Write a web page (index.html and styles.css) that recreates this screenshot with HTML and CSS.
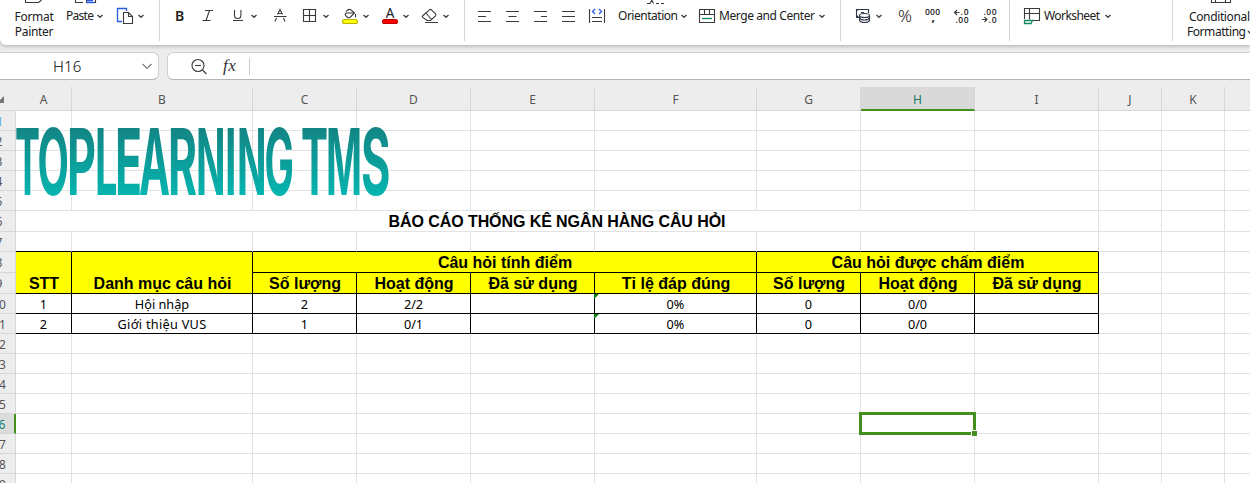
FILE: index.html
```html
<!DOCTYPE html>
<html lang="vi">
<head>
<meta charset="utf-8">
<title>Spreadsheet</title>
<link rel="stylesheet" href="styles.css">
</head>
<body>
<div class="app">
<header class="toolbar">
  <div class="group g-clip">
    <div class="tool fmt"><svg class="peek" viewBox="24 0 20 3"><path d="M25.500 0v2.500h13l3-2.500"/></svg><span>Format</span><span>Painter</span></div>
    <svg class="tool w50" viewBox="66 0 50 46"><path d="M75.500 0v2.500h7.500M86.500 0v2.500h9V0"/><path class="blue" d="M87 .5h6M86.500 2.500h8"/><text class="ui" x="66" y="20" textLength="28">Paste</text><path class="caret" d="m97.500 15 2.500 2.300 2.500-2.300"/></svg>
    <svg class="tool w43" viewBox="116 0 43 46"><path class="blue" d="M122 21.500h-4.500v-13h9V11"/><path d="M123.500 12.500h5l4 4v7h-9zM128.500 12.500v4h4"/><path class="caret" d="m138.500 15 2.500 2.300 2.500-2.300"/></svg>
  </div>
  <div class="group g-font">
    <svg class="tool w30" viewBox="165 0 30 46"><text class="glyph b" x="175" y="20.500">B</text></svg>
    <svg class="tool w30" viewBox="195 0 30 46"><path d="M205 10.500h8M202.500 20.500h8M209.500 10.500l-3.500 10"/></svg>
    <svg class="tool w40" viewBox="225 0 40 46"><path d="M234.500 10v5.500q0 3 3.200 3t3.200-3V10M233 20.500h10"/><path class="caret" d="m251.500 15 2.500 2.300 2.500-2.300"/></svg>
    <svg class="tool w30" viewBox="265 0 30 46"><path d="M274 16.500h12.500M277.500 14.500l2.500-5 2.500 5M278 13.500h4M276.500 18l-1.500 3.500M283.500 18l1.500 3.500"/></svg>
    <svg class="tool w40" viewBox="295 0 40 46"><path d="M303.500 9.500h12v12h-12zM309.500 9.500v12M303.500 15.500h12"/><path class="caret" d="m323.500 15 2.500 2.300 2.500-2.300"/></svg>
    <svg class="tool w40" viewBox="335 0 40 46"><path d="M346 11.500q2-2.500 4.500-2l4 3.500-4.500 4.500q-1.500.8-3-.5l-1.500-1.500q-.7-1.300.5-2.500h7.500M355.500 14v3.500"/><rect class="yellow" x="342.500" y="19.500" width="15" height="4" rx="2"/><path class="caret" d="m363.500 15 2.500 2.300 2.500-2.300"/></svg>
    <svg class="tool w40" viewBox="375 0 40 46"><text class="glyph" x="390" y="18" text-anchor="middle">A</text><rect class="red" x="382.500" y="19.500" width="15" height="4" rx="2"/><path class="caret" d="m403.500 15 2.500 2.300 2.500-2.300"/></svg>
    <svg class="tool w49" viewBox="415 0 49 46"><path d="m422.500 16 7-6.200q1-.8 2 0l4 4q.8 1 0 2l-5 4.700h-3.500l-4.500-3.300q-.6-.6 0-1.200zM426 13l5.500 6.500M425 22.500h13"/><path class="caret" d="m443.500 15 2.500 2.300 2.500-2.300"/></svg>
  </div>
  <div class="group g-align">
    <svg class="tool w28" viewBox="470 0 28 46"><path d="M478 11.500h13M478 16.500h8M478 21.500h13"/></svg>
    <svg class="tool w28" viewBox="498 0 28 46"><path d="M506 11.500h13M508.500 16.500h8M506 21.500h13"/></svg>
    <svg class="tool w28" viewBox="526 0 28 46"><path d="M534 11.500h13M541 16.500h6M534 21.500h13"/></svg>
    <svg class="tool w28" viewBox="554 0 28 46"><path d="M562 11.500h13M562 16.500h13M562 21.500h13"/></svg>
    <svg class="tool w28" viewBox="582 0 28 46"><path d="M589.500 9v14M604.500 9v14M592 17.500h10M592 21.500h10"/><path class="blue" d="m595 9-2.500 2.500L595 14M599 9l2.500 2.500L599 14"/></svg>
    <svg class="tool w85" viewBox="610 0 85 46"><path d="M647 3.500h3l2-3.500M652 .5l1.500 3M656 3.500h3M661 3.500h3"/><text class="ui" x="618" y="20" textLength="60">Orientation</text><path class="caret" d="m681.500 15 2.500 2.300 2.500-2.300"/></svg>
    <svg class="tool w145" viewBox="695 0 145 46"><path d="M699.500 9.500h15v13h-15zM699.500 14.500h15M704.500 9.500v5M709.500 9.500v5"/><path class="green" d="M702 18.500h10"/><text class="ui" x="719" y="20" textLength="96">Merge and Center</text><path class="caret" d="m819.500 15 2.500 2.300 2.500-2.300"/></svg>
  </div>
  <div class="group g-num">
    <svg class="tool w45" viewBox="845 0 45 46"><path class="navy" d="M859 17.500h-2.500v-8h12V13M861 12.500h3M856.500 10.500l2-1M856.500 15.500l2 2"/><path class="navy" fill="#fff" d="M859.500 16v4.500q1 2 5 2t5-2V16"/><ellipse class="navy" cx="864.500" cy="15.500" rx="5" ry="2"/><path class="navy" d="M859.500 18q1 2 5 2t5-2"/><path class="caret" d="m876.500 15 2.500 2.300 2.500-2.300"/></svg>
    <svg class="tool w30" viewBox="890 0 30 46"><text class="pct" x="898" y="21.500" textLength="14" lengthAdjust="spacingAndGlyphs">%</text></svg>
    <svg class="tool w28" viewBox="920 0 28 46"><text class="tiny" x="925" y="15" textLength="15">000</text><text class="tiny comma" x="931.500" y="21">,</text></svg>
    <svg class="tool w28" viewBox="948 0 28 46"><path d="M954.500 12.500h5M957 10l-2.500 2.500L957 15"/><text class="tiny" x="960.500" y="15" textLength="8">.0</text><text class="tiny" x="955.500" y="23" textLength="13">.00</text></svg>
    <svg class="tool w33" viewBox="976 0 33 46"><text class="tiny" x="983.500" y="15" textLength="13">.00</text><path d="M982 19.500h5M984.500 17l2.500 2.500-2.500 2.500"/><text class="tiny" x="988.500" y="23" textLength="8">.0</text></svg>
  </div>
  <div class="group g-sheet">
    <svg class="tool w145" viewBox="1015 0 145 46"><path d="M1024.500 19V8.500h15v12H1033M1024.500 13.500h15M1029.500 8.500v11"/><path class="green" d="M1024.500 20.500h8l-1.500 3h-6.500z"/><text class="ui" x="1044" y="20" textLength="56">Worksheet</text><path class="caret" d="m1105.500 15 2.500 2.300 2.500-2.300"/></svg>
  </div>
  <div class="group g-cond">
    <svg class="tool w90" viewBox="1173 0 90 46"><path d="M1211.500 0v2.500h19V0M1215.500 0v2.500M1225.500 0v2.500"/><text class="ui" x="1189" y="21" textLength="61">Conditional</text><text class="ui" x="1187" y="36" textLength="59">Formatting</text><path class="caret" d="m1248 31 2 2 2-2"/></svg>
  </div>
</header>
<div class="formula">
  <div class="namebox"><span>H16</span><svg viewBox="142 62 10 8" width="10" height="8"><path class="thin" d="m142.500 64 4.500 4.500 4.500-4.500"/></svg></div>
  <div class="fxbox">
    <svg viewBox="190 57 18 18" width="18" height="18"><circle cx="198" cy="65.500" r="6"/><path d="M195 65.500h6M202.500 70l4 4"/></svg>
    <span class="fx">fx</span><i class="bar"></i>
  </div>
</div>
<main class="sheet">
<table>
<colgroup><col class="rh"><col class="ca"><col class="cb"><col class="cc"><col class="cd"><col class="ce"><col class="cf"><col class="cc"><col class="cd"><col class="ce"><col class="cj"><col class="cj"><col class="cj"></colgroup>
<tr class="cols"><th class="corner"><svg class="mark" viewBox="0 0 7 7" width="7" height="7"><path d="M7 0v7H0z"/></svg></th><th>A<th>B<th>C<th>D<th>E<th>F<th>G<th class="on">H<th>I<th>J<th>K<th></tr>
<tr><th class="first">1</th><td class="logo-cell"><svg class="logo" viewBox="0 0 376 76" width="376" height="76" role="img">
<defs><linearGradient id="teal" gradientUnits="userSpaceOnUse" x1="0" y1="4" x2="0" y2="72"><stop offset="0" stop-color="#128584"/><stop offset="1" stop-color="#06b5b0"/></linearGradient></defs>
<text y="71"><tspan x="-1" textLength="25" lengthAdjust="spacingAndGlyphs">T</tspan><tspan x="21.500" textLength="31.500" lengthAdjust="spacingAndGlyphs">O</tspan><tspan x="51" textLength="29" lengthAdjust="spacingAndGlyphs">P</tspan><tspan x="79" textLength="22.500" lengthAdjust="spacingAndGlyphs">L</tspan><tspan x="99" textLength="27" lengthAdjust="spacingAndGlyphs">E</tspan><tspan x="123" textLength="31" lengthAdjust="spacingAndGlyphs">A</tspan><tspan x="152" textLength="29" lengthAdjust="spacingAndGlyphs">R</tspan><tspan x="180" textLength="29.500" lengthAdjust="spacingAndGlyphs">N</tspan><tspan x="209" textLength="11.500" lengthAdjust="spacingAndGlyphs">I</tspan><tspan x="221" textLength="29.500" lengthAdjust="spacingAndGlyphs">N</tspan><tspan x="248.500" textLength="29.500" lengthAdjust="spacingAndGlyphs">G</tspan></text>
<text y="71"><tspan x="285" textLength="27" lengthAdjust="spacingAndGlyphs">T</tspan><tspan x="310" textLength="36" lengthAdjust="spacingAndGlyphs">M</tspan><tspan x="345" textLength="29.500" lengthAdjust="spacingAndGlyphs">S</tspan></text>
</svg><td><td><td><td><td><td><td><td><td><td><td></tr>
<tr><th>2</th><td><td><td><td><td><td><td><td><td><td><td><td></tr>
<tr><th>3</th><td><td><td><td><td><td><td><td><td><td><td><td></tr>
<tr><th>4</th><td><td><td><td><td><td><td><td><td><td><td><td></tr>
<tr><th>5</th><td><td><td><td><td><td><td><td><td><td><td><td></tr>
<tr class="tall"><th>6</th><td colspan="9" class="title"><span>BÁO CÁO THỐNG KÊ NGÂN HÀNG CÂU HỎI</span><td><td><td></tr>
<tr class="edge"><th>7</th><td><td><td><td><td><td><td><td><td><td><td><td></tr>
<tr class="tall"><th>8</th><td class="h low" rowspan="2">STT<td class="h low" rowspan="2">Danh mục câu hỏi<td class="h" colspan="4">Câu hỏi tính điểm<td class="h" colspan="3">Câu hỏi được chấm điểm<td><td><td></tr>
<tr class="tall"><th>9</th><td class="h">Số lượng<td class="h">Hoạt động<td class="h">Đã sử dụng<td class="h">Tỉ lệ đáp đúng<td class="h">Số lượng<td class="h">Hoạt động<td class="h">Đã sử dụng<td><td><td></tr>
<tr><th>10</th><td class="d">1<td class="d">Hội nhập<td class="d">2<td class="d">2/2<td class="d"><td class="d flag">0%<td class="d">0<td class="d">0/0<td class="d"><td><td><td></tr>
<tr><th>11</th><td class="d">2<td class="d wide">Giới thiệu VUS<td class="d">1<td class="d">0/1<td class="d"><td class="d flag">0%<td class="d">0<td class="d">0/0<td class="d"><td><td><td></tr>
<tr><th>12</th><td><td><td><td><td><td><td><td><td><td><td><td></tr>
<tr><th>13</th><td><td><td><td><td><td><td><td><td><td><td><td></tr>
<tr><th>14</th><td><td><td><td><td><td><td><td><td><td><td><td></tr>
<tr><th>15</th><td><td><td><td><td><td><td><td><td><td><td><td></tr>
<tr><th class="on">16</th><td><td><td><td><td><td><td><td class="sel"><i class="box"></i><i class="handle"></i><td><td><td><td></tr>
<tr><th>17</th><td><td><td><td><td><td><td><td><td><td><td><td></tr>
<tr><th>18</th><td><td><td><td><td><td><td><td><td><td><td><td></tr>
<tr><th>19</th><td><td><td><td><td><td><td><td><td><td><td><td></tr>
</table>
</main>
</div>
</body>
</html>
```
FILE: styles.css
```css
* { box-sizing: border-box; }
body { margin: 0; background: #ededed; font-family: "Noto Sans", "Open Sans", sans-serif; }
.app { width: 1250px; height: 483px; overflow: hidden; display: flex; flex-direction: column; }

.toolbar { display: flex; flex: none; height: 45px; background: #fff; border-bottom-left-radius: 6px; box-shadow: 0 1px 4px rgba(0,0,0,.28); }
.group { display: flex; flex: none; height: 41px; border-left: 1px solid #d4d4d4; padding-left: 5px; }
.g-clip { width: 159px; border: 0; padding: 0; }
.g-font { width: 305px; }
.g-align { width: 376px; }
.g-num { width: 169px; padding-left: 4px; }
.g-sheet { width: 163px; }
.g-cond { width: 90px; padding: 0; }
.tool { flex: none; height: 46px; }
svg { fill: none; stroke: #3a3a3a; stroke-width: 1.1; display: block; }
svg text { stroke: none; fill: #202020; }
.ui { font-size: 12px; }
.fmt { width: 66px; font-size: 12px; line-height: 15px; color: #202020; display: flex; flex-direction: column; align-items: center; padding-left: 2px; }
.fmt span { letter-spacing: -.3px; }
.peek { width: 20px; height: 3px; margin-bottom: 6px; }
.w28 { width: 28px; } .w30 { width: 30px; } .w33 { width: 33px; } .w40 { width: 40px; }
.w43 { width: 43px; } .w45 { width: 45px; } .w49 { width: 49px; } .w50 { width: 50px; }
.w85 { width: 85px; } .w90 { width: 90px; } .w145 { width: 145px; }
.caret { stroke: #444; stroke-width: 1.4; }
.blue { stroke: #2b5be0; stroke-width: 1.3; }
.green { stroke: #108a63; stroke-width: 1.3; }
.navy { stroke: #2b3448; }
.yellow { fill: #ff0; stroke: #b9b400; }
.red { fill: #f00; stroke: #b80000; }
.glyph { font-size: 13.500px; }
.glyph.b { font-size: 14px; font-weight: 600; }
.pct { font-size: 16px; font-weight: 300; }
.tiny { font: 600 8.500px "Open Sans", sans-serif; }
.comma { font-size: 12px; font-weight: 700; }

.formula { display: flex; flex: none; gap: 8px; padding-top: 7px; height: 35px; }
.namebox, .fxbox { height: 28px; background: #fff; border: 1px solid #d0d0d0; border-bottom-color: #b4b4b4; display: flex; align-items: center; }
.namebox { width: 159px; border-left: 0; border-radius: 0 6px 6px 0; padding: 0 6px 0 53px; justify-content: space-between; font-size: 15px; font-weight: 300; letter-spacing: .2px; color: #000; }
.thin { stroke: #777; }
.fxbox { flex: 1; border-right: 0; border-radius: 6px 0 0 6px; padding-left: 22px; }
.fx { font: italic 17px "Liberation Serif", serif; color: #333; margin-left: 15px; width: 16px; line-height: 18px; letter-spacing: .5px; }
.bar { width: 1px; height: 17px; margin-left: 10px; background: #ccc; }

.sheet { padding-top: 7px; flex: none; }
table { table-layout: fixed; width: 1304px; margin-left: -17px; border-collapse: separate; border-spacing: 0; }
.rh { width: 33px; } .ca { width: 56px; } .cb { width: 181px; } .cc { width: 104px; } .cd { width: 114px; }
.ce { width: 124px; } .cf { width: 162px; } .cj { width: 63px; }
th, td { padding: 1px 0 0; height: 20px; line-height: 17px; border: solid #e2e2e2; border-width: 0 1px 1px 0; text-align: center; vertical-align: middle; white-space: nowrap; }
td { background: #fff; font-size: 12.700px; color: #000; }
th { background: #ededed; border-color: #d6d6d6; font-weight: 400; font-size: 12px; color: #555; }
.tall > * { height: 21px; }
.cols th { height: 24px; padding-top: 2px; }
.cols .on { background: #d9d9d9; border-bottom: 2px solid #43901f; color: #1a7a63; }
.cols .corner { border-right-color: #ededed; }
.mark { margin-left: 14px; fill: #777; stroke: none; }
th.first { color: #55a5dc; padding-left: 2px; }
th.on { background: #dcdcdc; color: #12806c; border-right: 2px solid #43901f; }
.cols th.on { border-right: 1px solid #d6d6d6; }
.logo-cell { position: relative; }
.logo { position: absolute; left: 0; top: 13px; z-index: 2; stroke: none; overflow: visible; }
.logo text { font: 750 92px Inter, sans-serif; fill: url(#teal); }
.title, .h { font: bold 16px/18px "Liberation Sans", Arial, sans-serif; padding-top: 1px; }
.title { letter-spacing: -.08px; }
.h { padding-left: 1px; }
.edge td:nth-child(-n+10) { border-bottom-color: #000; }
.h { background: #ff0; border-color: #000; }
.low { vertical-align: bottom; }
.d { border-color: #000; }
.wide { letter-spacing: .3px; }
.flag { position: relative; }
.flag::before { content: ""; position: absolute; left: -1px; top: 0; border: solid transparent; border-width: 0 5px 5px 0; border-top: 5px solid #0a7d0a; border-bottom: 0; }
.sel { position: relative; }
.box { position: absolute; left: -2px; top: -2px; width: 117px; height: 23px; border: 3px solid #43901f; }
.handle { position: absolute; left: 110px; top: 16px; width: 7px; height: 7px; background: #43901f; border: 1px solid #fff; }
```
